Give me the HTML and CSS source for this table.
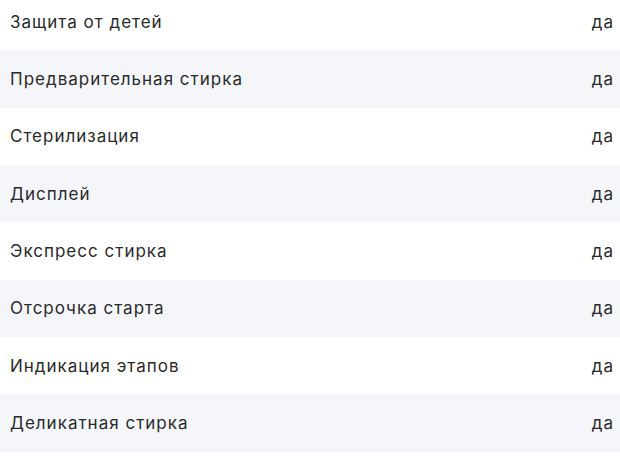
FILE: index.html
```html
<!DOCTYPE html>
<html lang="ru">
<head>
<meta charset="utf-8">
<link rel="stylesheet" href="styles.css">
</head>
<body>
<div class="specs">
  <div class="row"><span class="name">Защита от детей</span><span class="val">да</span></div>
  <div class="row"><span class="name">Предварительная стирка</span><span class="val">да</span></div>
  <div class="row"><span class="name">Стерилизация</span><span class="val">да</span></div>
  <div class="row"><span class="name">Дисплей</span><span class="val">да</span></div>
  <div class="row"><span class="name">Экспресс стирка</span><span class="val">да</span></div>
  <div class="row"><span class="name">Отсрочка старта</span><span class="val">да</span></div>
  <div class="row"><span class="name">Индикация этапов</span><span class="val">да</span></div>
  <div class="row"><span class="name">Деликатная стирка</span><span class="val">да</span></div>
</div>
</body>
</html>
```
FILE: styles.css
```css
html, body {
  margin: 0;
  padding: 0;
  background: #ffffff;
}
body {
  font-family: Inter, Roboto, sans-serif;
  font-size: 17px;
  letter-spacing: 1px;
  color: #2a2a2a;
  overflow: hidden;
}
.specs {
  display: flex;
  flex-direction: column;
  margin-top: -7px;
}
.row {
  display: flex;
  justify-content: space-between;
  align-items: center;
  height: 57.33px;
  padding: 0 6px 0 10px;
  box-sizing: border-box;
}
.row:nth-child(even) {
  background: #f5f6fa;
}
```
